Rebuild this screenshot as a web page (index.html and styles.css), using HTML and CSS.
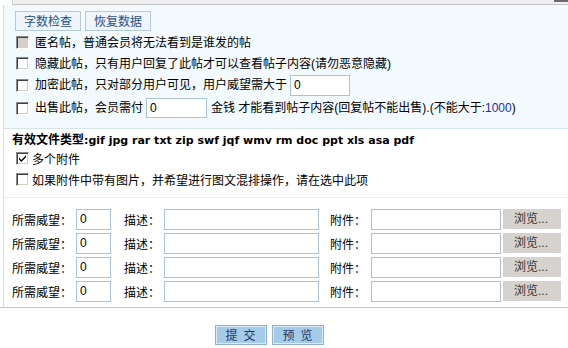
FILE: index.html
```html
<!DOCTYPE html>
<html>
<head>
<meta charset="utf-8">
<link rel="stylesheet" href="styles.css">
</head>
<body>
<div class="editor-end"><span class="corner"></span></div>
<div class="panel">
  <div class="sec sec-opts">
    <div class="tools">
      <button class="tbtn">字数检查</button>
      <button class="tbtn">恢复数据</button>
    </div>
    <div class="opt r1"><span class="cb disabled"></span><span class="lbl">匿名帖，普通会员将无法看到是谁发的帖</span></div>
    <div class="opt r2"><span class="cb"></span><span class="lbl">隐藏此帖，只有用户回复了此帖才可以查看帖子内容(请勿恶意隐藏)</span></div>
    <div class="opt r3"><span class="cb"></span><span class="lbl">加密此帖，只对部分用户可见，用户威望需大于</span><span class="inp w60">0</span></div>
    <div class="opt r4"><span class="cb"></span><span class="lbl">出售此帖，会员需付</span><span class="inp w61">0</span><span class="lbl2">金钱 才能看到帖子内容(回复帖不能出售).(不能大于:<span class="num">1000</span>)</span></div>
  </div>
  <div class="sec sec-types">
    <div class="types">有效文件类型<span class="ext">:gif jpg rar txt zip swf jqf wmv rm doc ppt xls asa pdf</span></div>
    <div class="opt2 m1"><span class="cb"><svg width="11" height="11" viewBox="0 0 11 11"><path d="M2 4.5 L4.3 7 L9 2.3 L9 4.3 L4.3 9 L2 6.5 Z" fill="#000"/></svg></span><span class="lbl3">多个附件</span></div>
    <div class="opt2 m2"><span class="cb"></span><span class="lbl3">如果附件中带有图片，并希望进行图文混排操作，请在选中此项</span></div>
  </div>
  <div class="sec sec-files">
    <div class="frow"><span class="fl">所需威望：</span><span class="inp wv">0</span><span class="fl fd">描述：</span><span class="inp wd"></span><span class="fl fa">附件：</span><span class="inp wf"></span><span class="browse">浏览...</span></div>
    <div class="frow"><span class="fl">所需威望：</span><span class="inp wv">0</span><span class="fl fd">描述：</span><span class="inp wd"></span><span class="fl fa">附件：</span><span class="inp wf"></span><span class="browse">浏览...</span></div>
    <div class="frow"><span class="fl">所需威望：</span><span class="inp wv">0</span><span class="fl fd">描述：</span><span class="inp wd"></span><span class="fl fa">附件：</span><span class="inp wf"></span><span class="browse">浏览...</span></div>
    <div class="frow"><span class="fl">所需威望：</span><span class="inp wv">0</span><span class="fl fd">描述：</span><span class="inp wd"></span><span class="fl fa">附件：</span><span class="inp wf"></span><span class="browse">浏览...</span></div>
  </div>
</div>
<div class="submit-bar">
  <button class="sbtn">提交</button>
  <button class="sbtn">预览</button>
</div>
</body>
</html>
```

FILE: styles.css
```css
html, body {
  margin: 0;
  padding: 0;
  background: #fff;
  width: 568px;
  height: 348px;
  overflow: hidden;
}
body {
  font-family: "Liberation Sans", "Noto Sans CJK SC", sans-serif;
  font-size: 12px;
  color: #000;
}
.editor-end {
  position: relative;
  height: 4px;
  margin-left: 12px;
  background: #efefef;
  border-left: 1px solid #c9d3da;
  border-bottom: 1px solid #c4c4c4;
}
.corner {
  position: absolute;
  right: 0;
  top: 0;
  width: 14px;
  height: 2px;
  background: #6a6a6a;
}
.panel {
  margin-left: 3px;
  border-left: 1px solid #cfe0ea;
}
.sec-opts {
  background: #f2fafd;
  padding: 6px 0 8px 12px;
  border-bottom: 1px solid #d6e4ec;
}
.tools {
  display: flex;
  gap: 4px;
  margin-left: -1px;
  height: 21px;
}
.tbtn {
  width: 66px;
  height: 20px;
  padding: 0;
  border: 1px solid #b4cad9;
  background: #eef6fb;
  color: #2b4f86;
  font-family: "Noto Sans CJK SC", sans-serif;
  font-size: 12px;
  line-height: 18px;
}
.opt {
  display: flex;
  align-items: center;
}
.r1 { height: 21px; }
.r2 { height: 21px; }
.r3 { height: 22px; }
.r4 { height: 24px; }
.cb {
  display: inline-flex;
  align-items: center;
  justify-content: center;
  box-sizing: border-box;
  width: 13px;
  height: 13px;
  background: #fff;
  border-top: 1px solid #8a8a8a;
  border-left: 1px solid #8a8a8a;
  border-right: 1px solid #fff;
  border-bottom: 1px solid #fff;
  box-shadow: inset 1px 1px 0 #404040, inset -1px -1px 0 #d4d0c8;
  flex: none;
}
.cb.disabled {
  background: #d4d0c8;
}
.lbl {
  margin-left: 6px;
  line-height: 14px;
}
.lbl2 {
  margin-left: 4px;
  line-height: 14px;
}
.num { color: #1c2fa8; }
.inp {
  display: inline-block;
  box-sizing: border-box;
  height: 21px;
  line-height: 19px;
  padding-left: 3px;
  border: 1px solid #abc3d3;
  background: #fff;
  color: #000;
  flex: none;
}
.w60 { width: 60px; margin-left: 3px; }
.w61 { width: 61px; margin-left: 3px; height: 20px; line-height: 18px; }
.sec-types {
  padding: 1px 0 7px 8px;
  border-bottom: 1px solid #e8f0f5;
}
.types {
  height: 20px;
  line-height: 20px;
  font-weight: bold;
  font-size: 12px;
  color: #000;
}
.ext {
  font-family: "DejaVu Sans", sans-serif;
  font-size: 11px;
}
.opt2 {
  display: flex;
  align-items: center;
  padding-left: 4px;
}
.m1 { height: 16px; }
.m2 { height: 22px; margin-top: 2px; }
.lbl3 {
  margin-left: 3px;
}
.sec-files {
  padding: 9px 0 4px 8px;
}
.frow {
  display: flex;
  align-items: center;
  height: 24px;
}
.fl {
  flex: none;
}
.wv { width: 35px; margin-left: 4px; }
.fd { margin-left: 13px; }
.wd { width: 155px; margin-left: 4px; }
.fa { margin-left: 11px; }
.wf { width: 130px; margin-left: 5px; }
.browse {
  box-sizing: border-box;
  width: 58px;
  height: 20px;
  margin-left: 2px;
  background: #d6d3ce;
  color: #333;
  text-align: center;
  line-height: 20px;
  padding-right: 2px;
}
.submit-bar {
  border-top: 1px solid #bcc6cd;
  display: flex;
  justify-content: center;
  gap: 5px;
  padding-top: 17px;
  padding-right: 30px;
}
.sbtn {
  width: 52px;
  height: 20px;
  padding: 0;
  border: 1px solid #8fb0c8;
  box-shadow: inset 0 0 0 1px #d9ebf7;
  background: #a5cbe8;
  color: #1b3968;
  font-family: "Noto Sans CJK SC", sans-serif;
  font-size: 12px;
  letter-spacing: 6px;
  text-indent: 6px;
  line-height: 18px;
}
```
